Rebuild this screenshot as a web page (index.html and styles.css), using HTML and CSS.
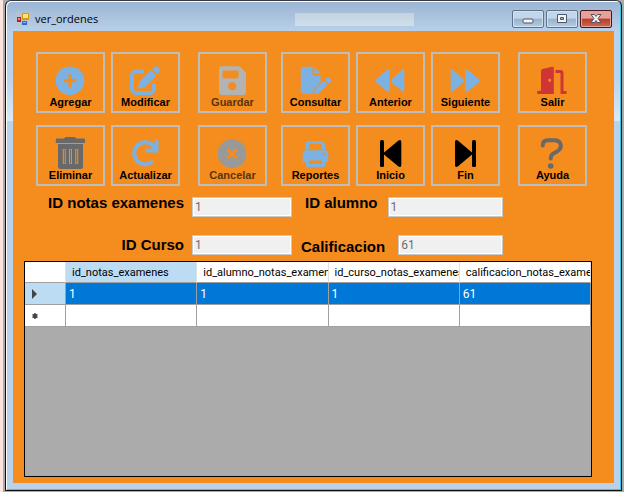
FILE: index.html
```html
<!DOCTYPE html>
<html lang="es">
<head>
<meta charset="utf-8">
<title>ver_ordenes</title>
<link rel="stylesheet" href="styles.css">
</head>
<body>
<main class="window">
  <header class="titlebar">
    <svg class="app-icon" viewBox="0 0 14 14" aria-hidden="true">
      <rect width="14" height="14" fill="#c3c3c3" opacity=".6"/>
      <rect x="1" y="5" width="4" height="5" fill="#b3201c"/>
      <rect x="2" y="6" width="2" height="2" fill="#f08a80"/>
      <rect x="6" y="1" width="7" height="7" fill="#d79a10"/>
      <rect x="7" y="2" width="5" height="4" fill="#ffe27a"/>
      <rect x="6" y="9" width="5" height="4" fill="#3568c8"/>
      <rect x="7" y="10" width="3" height="1" fill="#8fb4f4"/>
    </svg>
    <h1 class="title">ver_ordenes</h1>
    <span class="title-patch"></span>
    <div class="controls">
      <button class="control" aria-label="Minimizar"><svg viewBox="0 0 12 12"><rect x="1" y="6" width="10" height="4" rx="1" fill="#f4f4f4" stroke="#50566a"/></svg></button>
      <button class="control" aria-label="Maximizar"><svg viewBox="0 0 12 12"><path d="M1.500 1.500h9v8h-9z" fill="#f4f4f4" stroke="#50566a"/><path d="M4.500 4.500h3v2h-3z" fill="#9fb8d4" stroke="#50566a"/></svg></button>
      <button class="control control-close" aria-label="Cerrar"><svg viewBox="0 0 12 12"><path d="M1 1.500h3.500L6 3.500l1.500-2H11L8 5.500l3 4H7.500L6 7.500l-1.500 2H1l3-4z" fill="#f4f4f4" stroke="#50566a"/></svg></button>
    </div>
  </header>

  <div class="client">
    <nav class="toolbar">
      <button class="tool"><svg class="blue" viewBox="0 0 35 34"><circle cx="17" cy="18.700" r="14.300"/><path class="cut" d="M17 12.500v12.400M10.800 18.700h12.400"/></svg><span>Agregar</span></button>
      <button class="tool"><svg class="blue" viewBox="0 0 35 34"><path class="line" d="M16 9.500H8a4 4 0 0 0-4 4V27a4 4 0 0 0 4 4h14a4 4 0 0 0 4-4v-5.500"/><path d="M10 26.800l1.500-7.300L22.700 8.200l5.600 5.600L17.200 25.200zM24.200 6.800l1.500-1.400a3.600 3.600 0 0 1 5 0 3.600 3.600 0 0 1 0 5l-1.400 1.700z"/></svg><span>Modificar</span></button>
      <button class="tool" disabled><svg class="silver" viewBox="0 0 35 34"><path fill-rule="evenodd" d="M7 4.300h17.500l6.500 6.500V30a3 3 0 0 1-3 3H7a3 3 0 0 1-3-3V7.300a3 3 0 0 1 3-3zM9 8.500a1.500 1.500 0 0 0-1.500 1.500v5A1.500 1.500 0 0 0 9 16.500h13a1.500 1.500 0 0 0 1.500-1.500v-5A1.500 1.500 0 0 0 22 8.500zM17.300 20.300a4 4 0 1 0 0 8 4 4 0 1 0 0-8z"/></svg><span>Guardar</span></button>
      <button class="tool"><svg class="blue" viewBox="0 0 35 34"><path d="M5.500 4.700h9V12a1.500 1.500 0 0 0 1.500 1.500h6.500v7L16 27l-1.500 5h-9a2.700 2.700 0 0 1-2.700-2.700V7.400a2.700 2.700 0 0 1 2.700-2.700zM16.300 4.700l6.200 7h-6.200zM15.700 32.300l1.300-5.100 8.800-8.500 3.700 3.700-8.700 8.800zM27 17.500l1.500-1.400c1-.9 2-.9 3 0l1.200 1.200c.8 1 .8 1.800 0 2.700l-1.900 1.600z"/></svg><span>Consultar</span></button>
      <button class="tool"><svg class="blue" viewBox="0 0 35 34"><path d="M2.800 17.200L14.300 7.700q2.400-1.300 2.400 1.500v18.600q0 2.800-2.400 1.500L2.800 20.200q-1.200-1.500 0-3zM18.700 17.200L29 7.700q2.300-1.300 2.300 1.500v18.600q0 2.800-2.300 1.500L18.700 20.200q-1.200-1.500 0-3z"/></svg><span>Anterior</span></button>
      <button class="tool"><svg class="blue" viewBox="0 0 35 34"><path d="M15.300 17.200L5 7.700Q2.700 6.400 2.700 9.200v18.600q0 2.800 2.300 1.500l10.300-9.100q1-1.500 0-3zM31.200 17.200L19.500 7.700Q17 6.400 17 9.200v18.600q0 2.800 2.500 1.500l11.700-9.100q1.200-1.500 0-3z"/></svg><span>Siguiente</span></button>
      <button class="tool"><svg class="red" viewBox="0 0 35 34"><path fill-rule="evenodd" d="M6 8.700q0-1.400 1.500-1.800L17 4.800q1.800-.3 1.800 1.400V32H3.500a1.600 1.600 0 0 1 0-3.200H6zM14.700 16.500a1.500 1.800 0 1 0 0 3.600 1.500 1.800 0 1 0 0-3.600z"/><path class="line thin" d="M20.500 9.500h5q1.500 0 1.500 1.500v19.500h4.500"/></svg><span>Salir</span></button>

      <button class="tool"><svg class="gray" viewBox="0 0 35 34"><path d="M11 3.500l1.500-1.500h9.500l1.500 1.500H31q1 0 1 1.500v3H2.800V5q0-1.500 1-1.500zM5 9h25v22.500q0 2.500-2.500 2.500h-20Q5 34 5 31.500z"/><path class="cut" d="M11.300 14v15M17.500 14v15M23.700 14v15"/><path d="M10.900 14.500h.9v14h-.9zM17.100 14.500h.9v14h-.9zM23.300 14.500h.9v14h-.9z"/></svg><span>Eliminar</span></button>
      <button class="tool"><svg class="blue" viewBox="0 0 35 34"><path class="line" stroke-linecap="round" d="M27.500 14.500A11 11 0 1 0 23.500 27.300M28.500 6.300v9.200H19"/></svg><span>Actualizar</span></button>
      <button class="tool" disabled><svg class="ash" viewBox="0 0 35 34"><circle cx="17" cy="18.700" r="14.300"/><path class="cut" d="M12.500 14.200l9 9M21.500 14.200l-9 9"/></svg><span>Cancelar</span></button>
      <button class="tool"><svg class="blue" viewBox="0 0 35 34"><path d="M7.700 14V8q0-2 2-2H24l3.300 3.300V14H24v-3.500L22.500 9H11v5zM8 15.300h19q3.300 0 3.300 3.300V27h-3.500v-3.500h-18V27H4.700v-8.400q0-3.300 3.300-3.300z"/><path fill-rule="evenodd" d="M7.700 23h19.600v7q0 2-2 2H9.700q-2 0-2-2zM11 25.500V29h13v-3.500z"/><circle class="hole" cx="26.500" cy="19.500" r="1.200"/></svg><span>Reportes</span></button>
      <button class="tool"><svg class="black" viewBox="0 0 35 34"><rect x="7" y="5" width="4" height="27" rx="1.500"/><path d="M11 17.500L25.500 5.400Q28.300 4 28.300 7v23q0 3-2.800 1.600L11 19.500z"/></svg><span>Inicio</span></button>
      <button class="tool"><svg class="black" viewBox="0 0 35 34"><rect x="24" y="5" width="4" height="27" rx="1.500"/><path d="M24 17.500L9.800 5.400Q7 4 7 7v23q0 3 2.800 1.600L24 19.500z"/></svg><span>Fin</span></button>
      <button class="tool"><svg class="gray" viewBox="0 0 35 34"><path class="line" stroke-linecap="round" d="M7.700 10.500C7.700 6.500 10 5.300 13 5.300h6.500c7 0 8.500 8 2.500 11.200-4 2.100-6.300 3-6.300 7"/><circle cx="15.700" cy="31" r="2.800"/></svg><span>Ayuda</span></button>
    </nav>

    <form class="fields">
      <div class="field-row">
        <label class="lead" for="notas">ID notas examenes</label>
        <input class="short" id="notas" value="1" disabled>
        <label class="second" for="alumno">ID alumno</label>
        <input class="long" id="alumno" value="1" disabled>
      </div>
      <div class="field-row centered">
        <label class="lead" for="curso">ID Curso</label>
        <input class="short" id="curso" value="1" disabled>
        <label class="second low" for="calificacion">Calificacion</label>
        <input class="long" id="calificacion" value="61" disabled>
      </div>
    </form>

    <section class="grid">
      <table>
        <colgroup><col class="marker-col"><col><col><col><col></colgroup>
        <thead>
          <tr><th></th><th class="current">id_notas_examenes</th><th>id_alumno_notas_examenes</th><th>id_curso_notas_examenes</th><th>calificacion_notas_examenes</th></tr>
        </thead>
        <tbody>
          <tr class="selected"><td class="marker"><svg viewBox="0 0 8 10"><path d="M1 0l5 5-5 5z" fill="#444"/></svg></td><td>1</td><td>1</td><td>1</td><td>61</td></tr>
          <tr><td class="marker"><svg viewBox="0 0 8 10"><path d="M4 2v6M1.500 3.500l5 3M6.500 3.500l-5 3" stroke="#444" stroke-width="1.500"/></svg></td><td></td><td></td><td></td><td></td></tr>
        </tbody>
      </table>
    </section>
  </div>
</main>
</body>
</html>
```
FILE: styles.css
```css
* { box-sizing: border-box; }

body {
  margin: 0;
  min-height: 100vh;
  display: flex;
  padding: 0 2px 1px 3px;
  background: linear-gradient(90deg, #fde4df 3px, #a9a9a9 3px);
  font-family: "Liberation Sans", Arial, sans-serif;
}

.window {
  flex: 1;
  min-width: 0;
  display: flex;
  flex-direction: column;
  margin-left: 2px;
  padding: 0 7px 7px 6px;
  border: 1px solid #111;
  border-top-color: #3a3a44;
  border-radius: 6px 6px 0 0;
  background: linear-gradient(#9bb4d2 0, #b9d1ea 31px, #b9d1ea 75px, #dce8f5 120px, #b9d1ea 120px);
  box-shadow: inset 1px 1px 0 #fff, inset -1px -1px 0 #35c8e6;
}

.titlebar {
  display: flex;
  align-items: center;
  height: 30px;
  padding: 6px 2px 0 4px;
}

.app-icon { width: 14px; height: 14px; }

.title {
  flex: 1;
  margin: 0 0 0 5px;
  font: 11px/16px "Open Sans", "Noto Sans", sans-serif;
  color: #000;
}

.title-patch {
  width: 119px;
  height: 13px;
  margin-right: 98px;
  background: linear-gradient(#c3d2df, #d0dfec);
}

.controls { display: flex; gap: 2px; }

.control {
  width: 32px;
  height: 18px;
  padding: 0;
  display: grid;
  place-items: center;
  border: 1px solid #5f748c;
  border-radius: 2px;
  background: linear-gradient(#c3d5e8 45%, #98b3cf 50%, #b4cce4);
  box-shadow: inset 0 0 0 1px #d3e2f1;
}

.control svg { width: 12px; height: 12px; }

.control-close {
  border-color: #4a1420;
  background: linear-gradient(#e5a397 45%, #b83c28 50%, #cf6a52);
  box-shadow: inset 0 0 0 1px #e2a59c;
}

.client {
  flex: 1;
  display: flex;
  flex-direction: column;
  margin-left: 1px;
  padding: 21px 22px 6px 11px;
  background: #f58c1e;
}

.toolbar {
  display: grid;
  grid-template-columns: 75px 87px 83px 75px 75px 87px 69px;
  row-gap: 12px;
  padding-left: 12px;
}

.tool {
  width: 69px;
  height: 61px;
  padding: 8px 0 0;
  display: flex;
  flex-direction: column;
  align-items: center;
  border: 2px solid #bdbdbd;
  background: none;
  color: #000;
  font: bold 11px/12px "Liberation Sans", Arial, sans-serif;
}

.tool:disabled { color: #5a3410; }
.tool svg { flex: none; width: 35px; height: 34px; }

.blue { color: #7bb2e2; }
.silver { color: #b3b3b3; }
.ash { color: #999; }
.gray { color: #696969; }
.red { color: #cf3436; }
.black { color: #000; }

.tool svg { fill: currentColor; }
.tool .line { fill: none; stroke: currentColor; stroke-width: 4; }
.tool .thin { stroke-width: 3; }
.tool .cut { fill: none; stroke: #f58c1e; stroke-width: 3; }
.tool .hole { fill: #f58c1e; }

.fields {
  display: flex;
  flex-direction: column;
  gap: 18px;
  margin-top: 11px;
  padding-right: 89px;
}

.field-row { display: flex; align-items: flex-start; }
.field-row.centered { align-items: center; }

.fields label {
  font-size: 15px;
  font-weight: bold;
  line-height: 12px;
  white-space: nowrap;
}

.lead { width: 160px; text-align: right; }
.second { margin: 0 10px 0 13px; }
.fields .low { margin: 0 13px 0 9px; line-height: 16px; align-self: flex-end; }

.fields input {
  height: 20px;
  min-width: 0;
  padding: 0 2px;
  border: 1px solid #c8c8c8;
  background: #f0f0f0;
  box-shadow: inset 0 0 0 1px #fff;
  color: #6d6d6d;
  font: 12px/16px Roboto, sans-serif;
}

.short { width: 100px; margin-left: 8px; }
.long { flex: 1; }

.grid {
  flex: 1;
  margin-top: 6px;
  border: 1px solid #000;
  background: #ababab;
}

table {
  width: 100%;
  table-layout: fixed;
  border-collapse: separate;
  border-spacing: 0;
  font: 12px/16px Roboto, sans-serif;
}

.marker-col { width: 41px; }

th, td {
  height: 22px;
  padding: 0 3px;
  border-right: 1px solid #a0a0a0;
  border-bottom: 1px solid #a0a0a0;
  background: #fff;
  text-align: left;
  white-space: nowrap;
  overflow: hidden;
}

th {
  height: 21px;
  padding: 2px 0 0 6px;
  border-right-color: #e0e0e0;
  font-size: 11px;
  font-weight: normal;
}

.current { background: #bcdcf4; }
.selected td { background: #0078d7; color: #fff; }
td.marker { padding-left: 6px; }
.selected td.marker { background: #bcdcf4; }
.marker svg { display: block; width: 8px; height: 10px; }
```
